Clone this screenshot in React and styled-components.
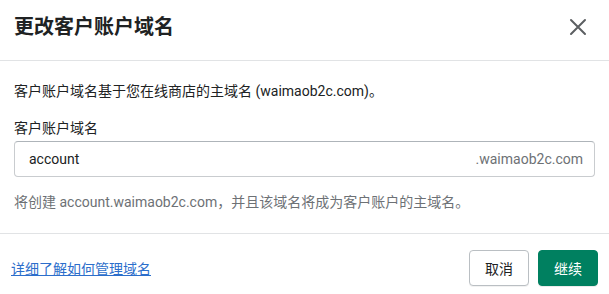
import styled, { createGlobalStyle } from "styled-components";

const GlobalStyle = createGlobalStyle`
  html, body {
    margin: 0;
    padding: 0;
    background: #fff;
  }
  body {
    font-family: Roboto, "Noto Sans CJK SC", sans-serif;
    color: #202223;
  }
`;

const Modal = styled.div`
  width: 609px;
  height: 294px;
  overflow: hidden;
  background: #fff;
`;

const Header = styled.div`
  height: 61px;
  padding: 13px 14px 0 14px;
  box-sizing: border-box;
  display: flex;
  justify-content: space-between;
  align-items: flex-start;
  border-bottom: 1px solid #e1e3e5;
`;

const Title = styled.h2`
  margin: 0;
  font-size: 20px;
  line-height: 28px;
  font-weight: 700;
  color: #202223;
`;

const CloseButton = styled.button`
  width: 28px;
  height: 28px;
  margin-right: 3px;
  border: none;
  background: none;
  padding: 0;
  display: flex;
  align-items: center;
  justify-content: center;
  cursor: pointer;
`;

const Body = styled.div`
  padding: 20px 14px 21px 14px;
  border-bottom: 1px solid #e1e3e5;
`;

const Text = styled.p`
  margin: 0;
  font-size: 14px;
  line-height: 20px;
  color: ${(p) => (p.muted ? "#6d7175" : "#202223")};
`;

const Label = styled.div`
  margin-top: 17px;
  margin-bottom: 3px;
  font-size: 14px;
  line-height: 20px;
`;

const Field = styled.div`
  height: 36px;
  box-sizing: border-box;
  border: 1px solid #c9cccf;
  border-top-color: #aeb4b9;
  border-radius: 4px;
  display: flex;
  align-items: center;
  padding: 0 11px 0 14px;
  margin-bottom: 15px;
`;

const Input = styled.input`
  flex: 1;
  border: none;
  outline: none;
  padding: 0;
  font: inherit;
  font-size: 14px;
  color: #202223;
  background: transparent;
`;

const Suffix = styled.span`
  font-size: 14px;
  color: #6d7175;
`;

const Footer = styled.div`
  padding: 16px 11px 0 11px;
  display: flex;
  align-items: center;
  justify-content: space-between;
`;

const Link = styled.a`
  font-size: 14px;
  color: #2c6ecb;
  text-decoration: underline;
  cursor: pointer;
`;

const Actions = styled.div`
  display: flex;
  gap: 9px;
`;

const Button = styled.button`
  height: 36px;
  padding: 0 15px;
  border-radius: 4px;
  font-family: inherit;
  font-size: 14px;
  cursor: pointer;
  border: 1px solid ${(p) => (p.primary ? "#008060" : "#babfc3")};
  background: ${(p) => (p.primary ? "#008060" : "#fff")};
  color: ${(p) => (p.primary ? "#fff" : "#202223")};
  box-shadow: ${(p) =>
    p.primary ? "0 1px 0 rgba(0,0,0,0.08)" : "0 1px 0 rgba(0,0,0,0.05)"};
`;

function CloseIcon() {
  return (
    <svg width="18" height="18" viewBox="0 0 18 18">
      <path
        d="M2 2 L16 16 M16 2 L2 16"
        stroke="#5c5f62"
        strokeWidth="2"
        strokeLinecap="round"
      />
    </svg>
  );
}

export default function App() {
  return (
    <>
      <GlobalStyle />
      <Modal>
        <Header>
          <Title>更改客户账户域名</Title>
          <CloseButton aria-label="关闭">
            <CloseIcon />
          </CloseButton>
        </Header>
        <Body>
          <Text>客户账户域名基于您在线商店的主域名 (waimaob2c.com)。</Text>
          <Label>客户账户域名</Label>
          <Field>
            <Input defaultValue="account" />
            <Suffix>.waimaob2c.com</Suffix>
          </Field>
          <Text muted>
            将创建 account.waimaob2c.com，并且该域名将成为客户账户的主域名。
          </Text>
        </Body>
        <Footer>
          <Link>详细了解如何管理域名</Link>
          <Actions>
            <Button>取消</Button>
            <Button primary>继续</Button>
          </Actions>
        </Footer>
      </Modal>
    </>
  );
}
